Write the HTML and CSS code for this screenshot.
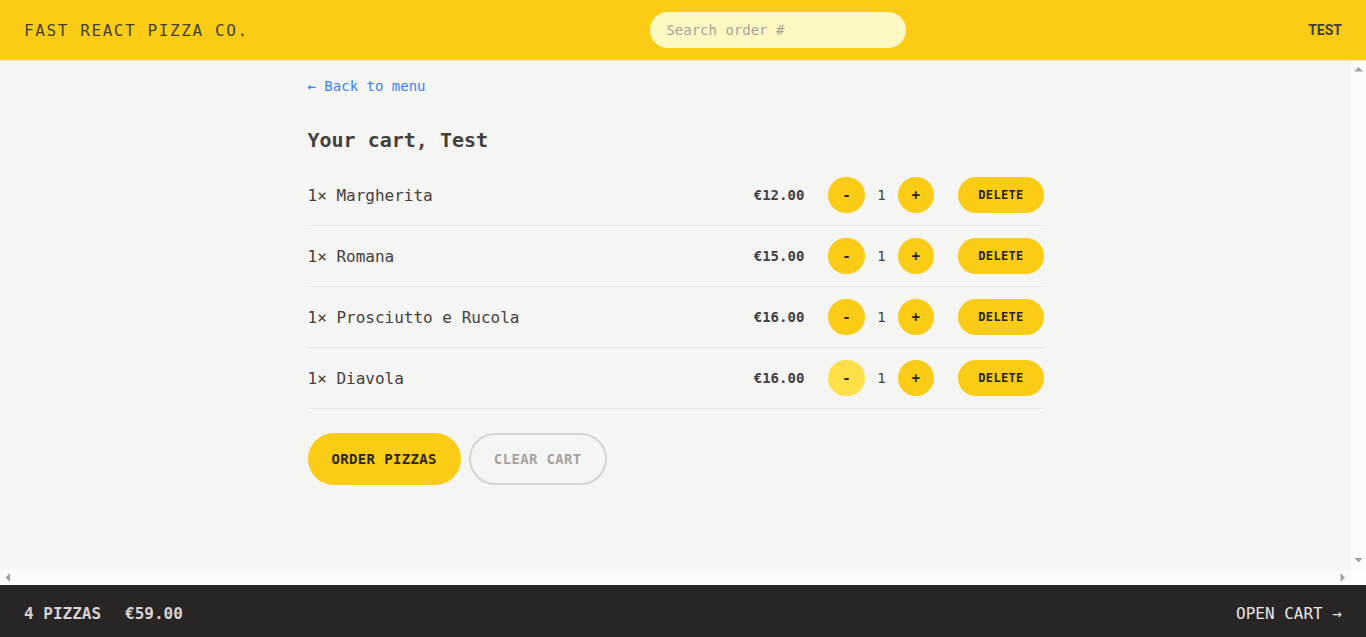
FILE: index.html
```html
<!DOCTYPE html>
<html lang="en">
<head>
<meta charset="utf-8">
<title>Fast React Pizza Co.</title>
<link rel="stylesheet" href="styles.css">
</head>
<body>
<div class="layout">
  <header class="header">
    <a class="logo" href="#">Fast React Pizza Co.</a>
    <form class="search"><input class="search-input" type="text" placeholder="Search order #"></form>
    <p class="username">Test</p>
  </header>
  <div class="viewport">
    <div class="scroller">
      <main class="main">
        <div class="cart">
          <div class="back-row"><a class="back-link" href="#">&larr; Back to menu</a></div>
          <h2 class="cart-title">Your cart, Test</h2>
          <ul class="cart-list">
            <li class="cart-item">
              <p class="item-name">1&times; Margherita</p>
              <div class="item-controls">
                <p class="item-price">€12.00</p>
                <div class="qty"><button class="btn-round">-</button><span class="qty-num">1</span><button class="btn-round">+</button></div>
                <button class="btn-small">Delete</button>
              </div>
            </li>
            <li class="cart-item">
              <p class="item-name">1&times; Romana</p>
              <div class="item-controls">
                <p class="item-price">€15.00</p>
                <div class="qty"><button class="btn-round">-</button><span class="qty-num">1</span><button class="btn-round">+</button></div>
                <button class="btn-small">Delete</button>
              </div>
            </li>
            <li class="cart-item">
              <p class="item-name">1&times; Prosciutto e Rucola</p>
              <div class="item-controls">
                <p class="item-price">€16.00</p>
                <div class="qty"><button class="btn-round">-</button><span class="qty-num">1</span><button class="btn-round">+</button></div>
                <button class="btn-small">Delete</button>
              </div>
            </li>
            <li class="cart-item">
              <p class="item-name">1&times; Diavola</p>
              <div class="item-controls">
                <p class="item-price">€16.00</p>
                <div class="qty"><button class="btn-round is-hover">-</button><span class="qty-num">1</span><button class="btn-round">+</button></div>
                <button class="btn-small">Delete</button>
              </div>
            </li>
          </ul>
          <div class="actions"><button class="btn-primary">Order pizzas</button><button class="btn-secondary">Clear cart</button></div>
        </div>
      </main>
    </div>
    <div class="vbar">
      <svg class="sb-btn" width="15" height="15" viewBox="0 0 15 15"><polygon points="3,10.5 7.5,6 12,10.5" fill="#a3a3a3"/></svg>
      <svg class="sb-btn" width="15" height="15" viewBox="0 0 15 15"><polygon points="3.5,3 11.5,3 7.5,7.5" fill="#a3a3a3"/></svg>
    </div>
    <div class="hbar">
      <svg class="sb-btn" width="15" height="15" viewBox="0 0 15 15"><polygon points="10,3 5.5,7.5 10,12" fill="#a3a3a3"/></svg>
      <svg class="sb-btn" width="15" height="15" viewBox="0 0 15 15"><polygon points="4.5,3 9,7.5 4.5,12" fill="#a3a3a3"/></svg>
    </div>
    <div class="corner"></div>
  </div>
  <footer class="footer">
    <p class="footer-summary"><span>4 pizzas</span><span>€59.00</span></p>
    <a class="open-cart" href="#">Open cart &rarr;</a>
  </footer>
</div>
</body>
</html>
```

FILE: styles.css
```css
* { box-sizing: border-box; }
html, body { margin: 0; padding: 0; }
body {
  font-family: "DejaVu Sans Mono", "Liberation Mono", monospace;
  font-size: 16px;
  line-height: 24px;
  color: #44403c;
  background: #f5f5f4;
}
p, h2, ul { margin: 0; padding: 0; }
a { text-decoration: none; color: inherit; }
button { font-family: inherit; border: 0; cursor: pointer; }

.layout {
  display: grid;
  grid-template-rows: auto 1fr auto;
  height: 100vh;
}

.header {
  display: flex;
  align-items: center;
  justify-content: space-between;
  padding: 12px 24px;
  background: #facc15;
  border-bottom: 1px solid #e7e5e4;
  text-transform: uppercase;
}
.logo { letter-spacing: 0.1em; color: #44403c; position: relative; top: 1px; }
.search { margin: 0; }
.search-input {
  display: block;
  width: 256px;
  height: 36px;
  padding: 8px 16px;
  border: 0;
  border-radius: 9999px;
  background: #fef9c3;
  font-family: inherit;
  font-size: 14px;
  line-height: 20px;
  color: #44403c;
  outline: none;
}
.search-input::placeholder { color: #a8a29e; }
.username {
  font-family: Roboto, "Liberation Sans", sans-serif;
  font-size: 14px;
  line-height: 20px;
  font-weight: 700;
  color: #44403c;
}

.viewport {
  display: grid;
  grid-template-columns: 1fr 15px;
  grid-template-rows: 1fr 15px;
  min-height: 0;
}
.scroller { overflow: hidden; min-height: 0; background: #f5f5f4; }
.vbar, .hbar {
  display: flex;
  justify-content: space-between;
  background: #fbfbfb;
}
.vbar { flex-direction: column; }
.corner { background: #fdfdfd; }
.sb-btn { display: block; }

.main { max-width: 768px; margin: 0 auto; }
.cart { padding: 13px 16px 12px; }
.back-link { font-size: 14px; color: #3b82f6; }
.cart-title { margin-top: 28px; font-size: 20px; line-height: 28px; font-weight: 600; }
.cart-list { margin-top: 11px; list-style: none; border-bottom: 1px solid #e7e5e4; }
.cart-item {
  display: flex;
  align-items: center;
  justify-content: space-between;
  padding: 12px 0;
  border-top: 1px solid #e7e5e4;
}
.cart-item:first-child { border-top: 0; }
.item-name { position: relative; top: 1px; }
.item-controls { display: flex; align-items: center; gap: 24px; }
.item-price { font-size: 14px; line-height: 20px; font-weight: 700; }
.qty { display: flex; align-items: center; gap: 12px; }
.qty-num { font-size: 14px; line-height: 20px; font-weight: 500; }

.btn-round, .btn-small, .btn-primary, .btn-secondary {
  display: inline-block;
  border-radius: 9999px;
  font-weight: 600;
  text-transform: uppercase;
  letter-spacing: 0.025em;
  color: #292524;
  background: #facc15;
}
.btn-round { padding: 8px 14px; font-size: 14px; line-height: 20px; }
.btn-round.is-hover { background: #fde047; }
.btn-small { padding: 10px 20px; font-size: 12px; line-height: 16px; }

.actions { margin-top: 24px; display: flex; gap: 8px; }
.btn-primary { padding: 16px 24px; font-size: 14px; line-height: 20px; }
.btn-secondary {
  padding: 14px 23px;
  font-size: 14px;
  line-height: 20px;
  background: transparent;
  border: 2px solid #d6d3d1;
  color: #a8a29e;
}

.footer {
  display: flex;
  align-items: center;
  justify-content: space-between;
  height: 52px;
  padding: 19px 24px 13px;
  background: #292524;
  color: #e7e5e4;
  text-transform: uppercase;
  line-height: 20px;
}
.footer-summary { display: flex; gap: 24px; font-weight: 600; color: #d6d3d1; }
.open-cart { color: #e7e5e4; }
```
